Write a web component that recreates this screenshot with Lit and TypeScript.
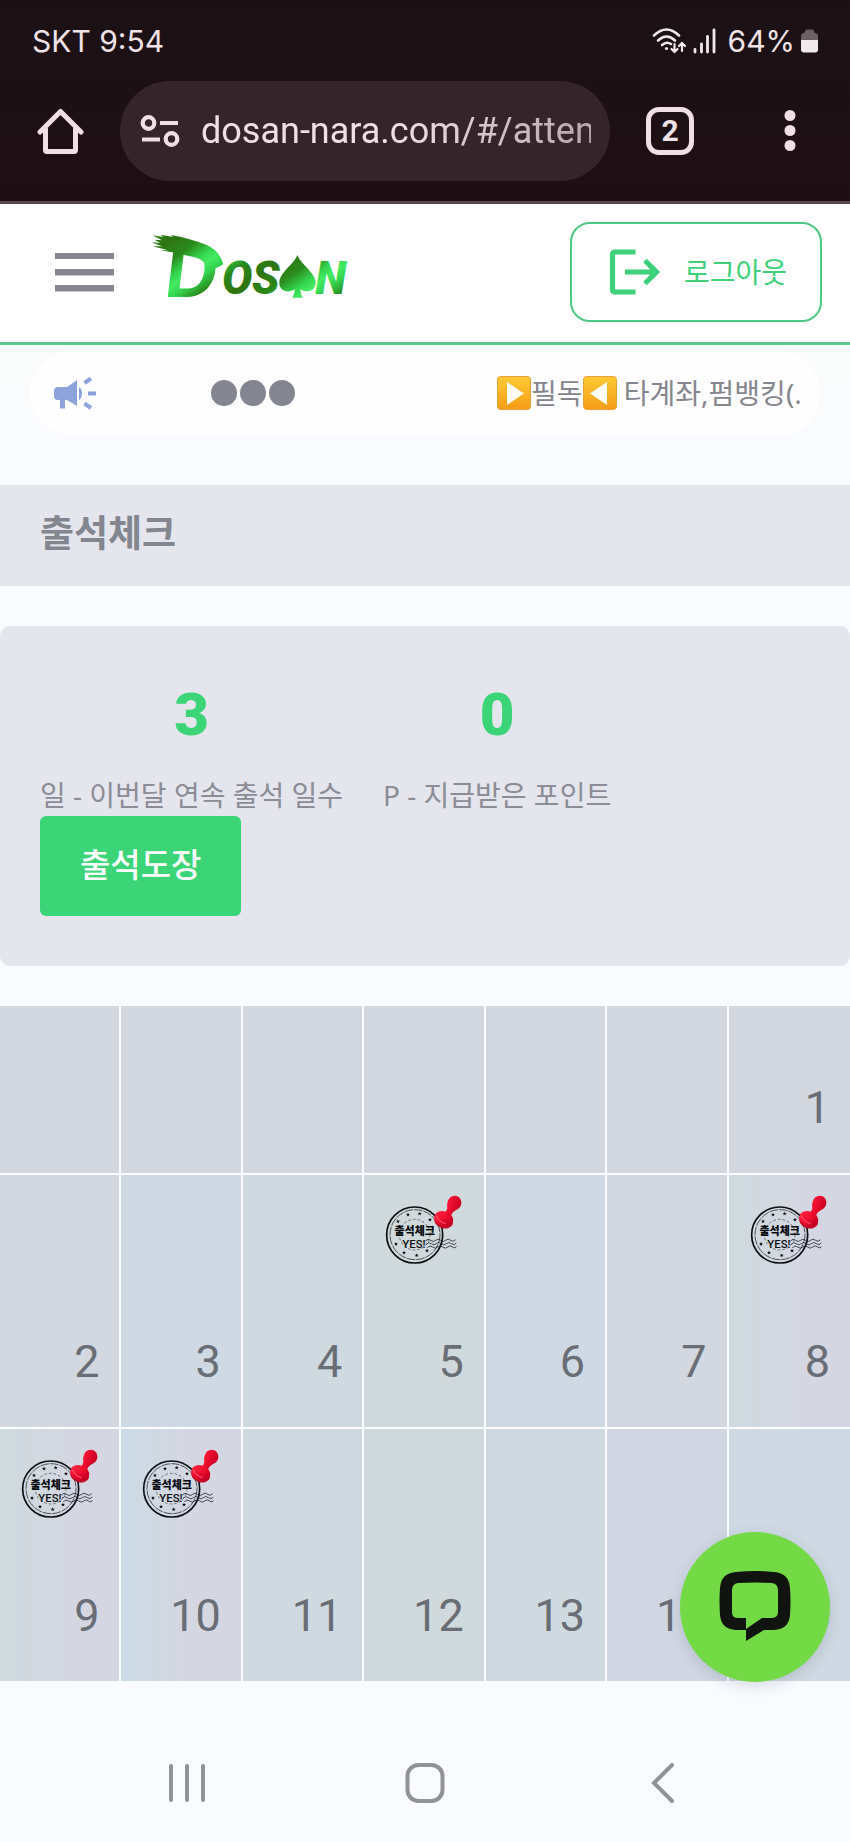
import { LitElement, html, svg, css, nothing } from "lit";
import { customElement, property } from "lit/decorators.js";

interface Day {
  n: number | null;
  tone: string;
  stamped?: boolean;
}

const WEEKS: Day[][] = [
  [
    { n: null, tone: "fog" },
    { n: null, tone: "fog" },
    { n: null, tone: "fog" },
    { n: null, tone: "fog" },
    { n: null, tone: "fog" },
    { n: null, tone: "fog" },
    { n: 1, tone: "fog" },
  ],
  [
    { n: 2, tone: "fog" },
    { n: 3, tone: "sky" },
    { n: 4, tone: "mist" },
    { n: 5, tone: "sage", stamped: true },
    { n: 6, tone: "sky" },
    { n: 7, tone: "fog" },
    { n: 8, tone: "dusk", stamped: true },
  ],
  [
    { n: 9, tone: "dusk", stamped: true },
    { n: 10, tone: "dawn", stamped: true },
    { n: 11, tone: "mist" },
    { n: 12, tone: "sage" },
    { n: 13, tone: "mist" },
    { n: 14, tone: "haze" },
    { n: 15, tone: "sky" },
  ],
];

@customElement("attendance-stamp")
class AttendanceStamp extends LitElement {
  static styles = css`
    :host {
      display: block;
    }
    svg {
      display: block;
      width: 79px;
      height: 70px;
    }
    .label {
      font: 900 33px "Noto Sans CJK KR", sans-serif;
    }
    .yes {
      font: 500 34px Roboto, sans-serif;
    }
  `;

  render() {
    const stars = [
      [98, 107], [133, 104], [164, 122], [68, 127], [62, 195], [86, 221], [124, 229], [155, 215],
    ];
    return html`<svg viewBox="26 48 237 210" role="img" aria-label="출석체크 완료">
      <defs>
        <linearGradient id="red" x1="0" y1="0" x2="1" y2="0.4">
          <stop offset="0" stop-color="#ff2b45" />
          <stop offset="0.5" stop-color="#f01030" />
          <stop offset="1" stop-color="#c80022" />
        </linearGradient>
      </defs>
      <circle cx="118" cy="168" r="84" fill="none" stroke="#0b0f14" stroke-width="5" />
      <circle cx="119" cy="167" r="75" fill="none" stroke="#0b0f14" stroke-width="2" stroke-dasharray="26 3" />
      <circle cx="118" cy="167" r="46" fill="none" stroke="#0b0f14" stroke-width="1.5" stroke-dasharray="8 6" />
      ${stars.map(
        ([x, y]) => svg`<path
          transform="translate(${x} ${y})"
          d="M0-6 1.6-2 6-1.8 2.6 1 3.7 5.2-0.2 2.8-3.7 5.2-2.6 1-6-1.8-1.6-2Z"
          fill="#0b0f14"
        />`
      )}
      <text class="label" x="118" y="167" text-anchor="middle" fill="#05080c">출석체크</text>
      <text class="yes" x="81" y="206" fill="#0b0f14">YES!</text>
      <g fill="none" stroke="#1b2229" stroke-width="2.4">
        <path d="M150 186q8-9 16-2t15 0 15 0 15 0 15 0 15-2" />
        <path d="M152 196q8-9 16-2t15 0 15 0 15 0 15 0 15-2" />
        <path d="M156 206q8-9 16-2t15 0 15 0 15 0 15 0 11-2" />
      </g>
      <ellipse cx="205" cy="126" rx="29" ry="22" transform="rotate(18 205 126)" fill="#c00a26" />
      <ellipse cx="205" cy="119" rx="29" ry="22" transform="rotate(18 205 119)" fill="url(#red)" />
      <path
        d="M196 112Q212 102 216 88Q214 76 217 68C220 56 228 50 238 50C250 50 259 60 258 73C257 87 245 92 235 98C228 104 226 112 224 120Q208 126 196 112Z"
        fill="url(#red)"
      />
      <path d="M184 112Q190 128 210 134" stroke="#ff7585" stroke-width="2.5" fill="none" stroke-linecap="round" />
    </svg>`;
  }
}

@customElement("site-logo")
class SiteLogo extends LitElement {
  static styles = css`
    :host {
      display: block;
    }
    svg {
      display: block;
      width: 204px;
      height: 88px;
      overflow: visible;
    }
    .initial {
      font: italic 900 220px Lato, sans-serif;
    }
    .rest {
      font: italic 900 136px Roboto, sans-serif;
    }
  `;

  render() {
    return html`<svg viewBox="24 0 612 264" role="img" aria-label="DOSAN">
      <defs>
        <linearGradient id="leaf" gradientUnits="userSpaceOnUse" x1="60" y1="60" x2="130" y2="160" spreadMethod="reflect">
          <stop offset="0" stop-color="#2f7412" />
          <stop offset="0.45" stop-color="#2a8a1c" />
          <stop offset="0.8" stop-color="#35d650" />
          <stop offset="1" stop-color="#43ea62" />
        </linearGradient>
      </defs>
      <g fill="url(#leaf)">
        <path
          d="M38 31 70 36 62 29 100 36 92 30Q150 40 200 60Q240 78 250 118L208 140Q196 100 150 94L96 82 60 76 84 76 38 64 66 64 34 52 60 54 44 44 66 46Z"
        />
        <text class="initial" x="76" y="217">D</text>
        <text class="rest" x="246" y="207">O</text>
        <text class="rest" x="336" y="207">S</text>
        <path
          d="M472 90C482 118 527 142 527 174C527 196 502 206 481 193Q481 206 488 218H457Q464 206 465 193C444 206 418 198 418 174C418 142 462 118 472 90Z"
        />
        <text class="rest" x="526" y="207">N</text>
      </g>
    </svg>`;
  }
}

@customElement("stat-item")
class StatItem extends LitElement {
  @property() value = "";
  @property() label = "";

  static styles = css`
    :host {
      display: flex;
      flex-direction: column;
      align-items: center;
    }
    .value {
      font: 900 60px/72px Roboto, sans-serif;
      color: #3bd577;
    }
    .label {
      margin-top: 24px;
      font: 400 28px/40px "Noto Sans", "Noto Sans CJK KR", sans-serif;
      color: #8b8c95;
      white-space: nowrap;
    }
  `;

  render() {
    return html`<span class="value">${this.value}</span><span class="label">${this.label}</span>`;
  }
}

@customElement("app-root")
class AppRoot extends LitElement {
  static styles = css`
    :host {
      display: flex;
      flex-direction: column;
      min-height: 100vh;
      box-sizing: border-box;
      background: #f9fbff;
      color: #85868d;
      font-family: Roboto, "Noto Sans CJK KR", sans-serif;
    }
    * {
      box-sizing: border-box;
    }
    button {
      border: 0;
      padding: 0;
      margin: 0;
      background: none;
      color: inherit;
      font: inherit;
    }
    svg {
      display: block;
      flex: none;
    }
    .browser {
      display: flex;
      flex-direction: column;
      background: linear-gradient(#1b1115, #1f0f14);
      border-bottom: 3px solid #5b474d;
      color: #f0e3e7;
    }
    .status {
      display: flex;
      align-items: center;
      justify-content: space-between;
      height: 81px;
      padding: 0 32px;
      font: 400 30px/40px Inter, sans-serif;
    }
    .signals {
      display: flex;
      align-items: center;
      gap: 6px;
    }
    .level {
      margin-left: 6px;
    }
    .toolbar {
      display: flex;
      align-items: center;
      padding: 0 52px 20px 36px;
    }
    .address {
      flex: 1;
      min-width: 0;
      display: flex;
      align-items: center;
      height: 100px;
      margin: 0 36px;
      padding: 0 19px 0 20px;
      border-radius: 50px;
      background: #35252a;
    }
    .url {
      flex: 1;
      min-width: 0;
      margin-left: 21px;
      padding: 0;
      border: 0;
      outline: 0;
      background: none;
      color: #f0dfe4;
      font: 400 36px/48px Roboto, sans-serif;
      -webkit-mask-image: linear-gradient(90deg, #000 50%, rgba(0, 0, 0, 0.7));
      mask-image: linear-gradient(90deg, #000 50%, rgba(0, 0, 0, 0.7));
    }
    .tabs {
      width: 48px;
      height: 48px;
      margin-right: 88px;
      border: 5px solid #f0dfe4;
      border-radius: 13px;
      font-size: 30px;
      font-weight: 700;
      line-height: 36px;
      text-align: center;
    }
    .site {
      display: flex;
      align-items: center;
      height: 141px;
      padding: 0 28px 2px 54px;
      border-bottom: 3px solid #5cc791;
      background: #fefffe;
    }
    .brand {
      margin-left: 34px;
      padding-bottom: 6px;
    }
    .logout {
      display: flex;
      align-items: center;
      gap: 23px;
      height: 100px;
      margin-left: auto;
      padding: 0 33px 0 37px;
      border: 2px solid #4cc985;
      border-radius: 20px;
      color: #3fd07a;
      font: 400 28px/40px "Noto Sans", "Noto Sans CJK KR", sans-serif;
    }
    .notice-area {
      padding: 6px 30px 50px;
      background: linear-gradient(#fafbfb, #f9fbff);
    }
    .notice {
      display: flex;
      align-items: center;
      height: 84px;
      padding: 0 19px 0 23px;
      border-radius: 42px;
      background: #fefeff;
    }
    .dots {
      display: flex;
      gap: 3px;
      margin-left: 114px;
      margin-right: auto;
    }
    .dot {
      width: 26px;
      height: 26px;
      border-radius: 50%;
      background: #838690;
    }
    .ticker {
      display: flex;
      align-items: center;
      width: 304px;
      overflow: hidden;
      white-space: pre;
      font: 400 28px/40px "Noto Sans", "Noto Sans CJK KR", sans-serif;
    }
    .title {
      margin: 0;
      padding: 0 40px 5px;
      background: #e4e5ed;
      color: #83868e;
      font: 700 37px/96px "Noto Sans", "Noto Sans CJK KR", sans-serif;
    }
    .summary {
      margin-top: 40px;
      padding: 53px 40px 50px;
      border-radius: 10px;
      background: #e4e5ed;
    }
    .stats {
      display: flex;
      gap: 40px;
    }
    .check {
      display: block;
      height: 100px;
      margin-top: 1px;
      padding: 0 40px 2px;
      border-radius: 6px;
      background: #3bd577;
      color: #fff;
      font: 500 33px/48px "Noto Sans", "Noto Sans CJK KR", sans-serif;
    }
    .calendar {
      width: 100%;
      margin-top: 40px;
      border-spacing: 0;
      table-layout: fixed;
      color: #696d75;
      font-size: 45px;
      line-height: 54px;
    }
    .calendar td {
      padding: 0;
      border-right: 2px solid #fbfdff;
      border-bottom: 2px solid #fbfdff;
    }
    .calendar td:last-child {
      border-right: 0;
    }
    .cell {
      display: flex;
      flex-direction: column;
      height: 252px;
      padding: 20px 20px 38px;
    }
    .short .cell {
      height: 167px;
    }
    .number {
      margin-top: auto;
      text-align: right;
    }
    .fog { background: #d3d7df; }
    .sky { background: #cfd9e3; }
    .mist { background: #cfdae0; }
    .sage { background: #d0d9db; }
    .haze { background: #d0d7e3; }
    .dusk { background: linear-gradient(90deg, #cfdadf, #d4d7e1 60%); }
    .dawn { background: linear-gradient(90deg, #cbdbe5, #d4d7e1 55%); }
    .chat {
      position: fixed;
      right: 20px;
      bottom: 160px;
      display: flex;
      align-items: center;
      justify-content: center;
      width: 150px;
      height: 150px;
      border-radius: 50%;
      background: #73da45;
      box-shadow: 0 4px 14px rgba(60, 70, 90, 0.18);
    }
    .keys {
      display: flex;
      align-items: center;
      margin-top: auto;
      height: 118px;
      padding: 0 68px;
    }
    .keys button {
      flex: 1;
      display: flex;
      justify-content: center;
    }
    .keys svg {
      fill: none;
      stroke: #929398;
      stroke-width: 4;
      stroke-linecap: round;
    }
  `;

  private arrowTile(left: boolean) {
    return html`<svg width="34" height="34" viewBox="0 0 34 34" role="img" aria-label=${left ? "◀" : "▶"}>
      <defs>
        <linearGradient id="amber" x1="0" y1="0" x2="0" y2="1">
          <stop offset="0" stop-color="#fdcb36" />
          <stop offset="1" stop-color="#f59b14" />
        </linearGradient>
      </defs>
      <rect x="0.5" y="0.5" width="33" height="33" rx="3" fill="url(#amber)" stroke="#e8a13a" />
      <path d=${left ? "M24 6V29L7 17.5Z" : "M10 6V29L27 17.5Z"} fill="#fffdf6" />
    </svg>`;
  }

  render() {
    return html`
      <div class="browser">
        <div class="status">
          <span>SKT 9:54</span>
          <span class="signals">
            <svg width="35" height="28" viewBox="0 0 35 28" fill="none" stroke="#f0e8ea" stroke-width="2.6" stroke-linecap="round">
              <path d="M2 8.5Q14.5-3.5 27 8.5" />
              <path d="M6 13.5Q14.5 5.5 23 13.5" />
              <path d="M10 18Q14.5 14 19 17" />
              <circle cx="14.5" cy="21.5" r="1.6" fill="#f0e8ea" stroke="none" />
              <path d="M22.5 17v8m-3-3 3 3 3-3M30 24v-8m-3 3 3-3 3 3" stroke-width="2.2" />
            </svg>
            <svg width="23" height="26" viewBox="0 0 23 26" stroke="#f0e8ea" stroke-width="2.8" stroke-linecap="round">
              <path d="M2 21.5V24M8.5 16V24M14.5 8.5V24M21 2V24" />
            </svg>
            <span class="level">64%</span>
            <svg width="17" height="24" viewBox="0 0 17 24">
              <path d="M0 7Q0 4 4 3.5V2.5Q4 0.5 6 0.5H11Q13 0.5 13 2.5V3.5Q17 4 17 7V11H0Z" fill="#6b6065" />
              <path d="M0 11H17V20.5Q17 23.5 14 23.5H3Q0 23.5 0 20.5Z" fill="#efe9eb" />
            </svg>
          </span>
        </div>
        <div class="toolbar">
          <button aria-label="홈">
            <svg width="48" height="48" viewBox="0 0 48 48" fill="none" stroke="#f0dfe4" stroke-width="5" stroke-linejoin="round" stroke-linecap="round">
              <path d="M4 25 24.5 4.5 45 25M9.5 22V43Q9.5 44.5 11 44.5H38Q39.5 44.5 39.5 43V22" />
            </svg>
          </button>
          <div class="address">
            <svg width="40" height="34" viewBox="0 0 40 34" fill="none" stroke="#f0dfe4" stroke-width="4.2">
              <circle cx="8.5" cy="9" r="5.8" />
              <path d="M20 9H38M2 25.5H20" />
              <circle cx="31.5" cy="25" r="5.8" />
            </svg>
            <input class="url" type="text" aria-label="주소" .value=${"dosan-nara.com/#/attendance"} />
          </div>
          <button class="tabs" aria-label="탭 2개">2</button>
          <button aria-label="메뉴">
            <svg width="16" height="44" viewBox="0 0 16 44" fill="#f0dfe4">
              <circle cx="8" cy="6.5" r="5.5" />
              <circle cx="8" cy="21.5" r="5.5" />
              <circle cx="8" cy="36.5" r="5.5" />
            </svg>
          </button>
        </div>
      </div>

      <header class="site">
        <button aria-label="전체 메뉴">
          <svg width="60" height="40" viewBox="0 0 60 40" fill="#85868f">
            <path d="M1 1H60V7H1ZM1 17H60V23.5H1ZM1 33H60V39.5H1Z" />
          </svg>
        </button>
        <a class="brand" href="#/"><site-logo></site-logo></a>
        <button class="logout">
          <svg width="52" height="46" viewBox="0 0 52 46" fill="none" stroke="#3fd07a" stroke-width="5.2">
            <path d="M26.5 3H6Q3.500 3 3.500 5.500V40.500Q3.500 43 6 43H26.500" />
            <path d="M16 23H48M36 11.500 47.500 23 36 34.500" />
          </svg>
          로그아웃
        </button>
      </header>

      <div class="notice-area">
        <div class="notice">
          <svg width="44" height="34" viewBox="0 0 44 34" fill="#8ca3dc">
            <path d="M5 11H14L24 4V30L14 24H12V32.5H7V24H5Q1 24 1 20V15Q1 11 5 11Z" />
            <path d="M26 11Q29 13 29 17.5T26 24Z" />
            <path d="M35 17.5H43M31.5 7 38 2.5M31.5 27.5 38 32" stroke="#8ca3dc" stroke-width="4" />
          </svg>
          <div class="dots"><span class="dot"></span><span class="dot"></span><span class="dot"></span></div>
          <div class="ticker">${this.arrowTile(false)}<span>필독</span>${this.arrowTile(true)}<span> 타계좌,펌뱅킹(.</span></div>
        </div>
      </div>

      <h1 class="title">출석체크</h1>

      <section class="summary">
        <div class="stats">
          <stat-item value="3" label="일 - 이번달 연속 출석 일수"></stat-item>
          <stat-item value="0" label="P - 지급받은 포인트"></stat-item>
        </div>
        <button class="check">출석도장</button>
      </section>

      <table class="calendar">
        <tbody>
          ${WEEKS.map(
            (week, i) => html`<tr class=${i === 0 ? "short" : "full"}>
              ${week.map(
                (day) => html`<td class=${day.tone}>
                  <div class="cell">
                    ${day.stamped ? html`<attendance-stamp></attendance-stamp>` : nothing}
                    ${day.n === null ? nothing : html`<span class="number">${day.n}</span>`}
                  </div>
                </td>`
              )}
            </tr>`
          )}
        </tbody>
      </table>

      <nav class="keys">
        <button aria-label="최근 앱">
          <svg width="40" height="40" viewBox="0 0 40 40"><path d="M4 3V37M20 3V37M36 3V37" /></svg>
        </button>
        <button aria-label="홈 화면">
          <svg width="40" height="40" viewBox="0 0 40 40"><rect x="2.5" y="2" width="35" height="36" rx="11" /></svg>
        </button>
        <button aria-label="뒤로">
          <svg width="24" height="40" viewBox="0 0 24 40"><path d="M21 2 3 20 21 38" /></svg>
        </button>
      </nav>

      <button class="chat" aria-label="채팅 상담">
        <svg width="72" height="72" viewBox="0 0 72 72">
          <path
            d="M17 1Q36-1 55 1Q70 2 71 17Q72 30 71 44Q70 58 55 59H45L27 70V58L43 47H52Q59 47 59 41V19Q59 13 53 12Q36 11 19 12Q13 13 13 19V41Q13 47 19 47H27V59H17Q2 58 1 44Q0 30 1 17Q2 2 17 1Z"
            fill="#111310"
          />
        </svg>
      </button>
    `;
  }
}
